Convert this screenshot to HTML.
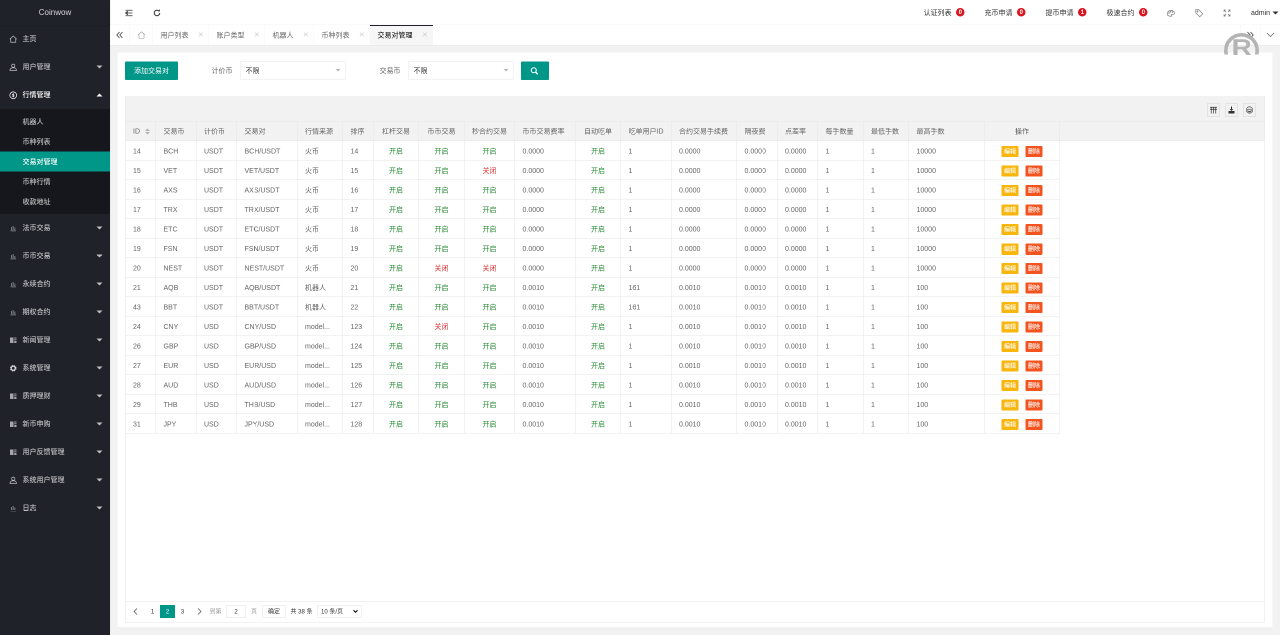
<!DOCTYPE html>
<html lang="zh-CN">
<head>
<meta charset="utf-8">
<title>Coinwow</title>
<style>
*{box-sizing:border-box;margin:0;padding:0}
html,body{width:1280px;height:635px;overflow:hidden;background:#f2f2f2}
body{font-family:"Liberation Sans","Noto Sans CJK SC",sans-serif;font-size:14px;color:#666;line-height:24px}
#root{position:absolute;left:0;top:0;width:2560px;height:1270px;transform:scale(.5);transform-origin:0 0;overflow:hidden;will-change:transform}
a{text-decoration:none;color:inherit}
ul{list-style:none}
.abs{position:absolute}
/* side */
#side{position:absolute;left:0;top:0;width:220px;height:1270px;background:#20222A;color:rgba(255,255,255,.7);z-index:5;box-shadow:1px 0 2px 0 rgba(0,0,0,.05)}
#logo{position:absolute;left:0;top:0;width:220px;height:50px;line-height:50px;text-align:center;font-size:16px;color:rgba(255,255,255,.8);background:#20222A;box-shadow:0 1px 2px 0 rgba(0,0,0,.15);z-index:2}
#nav{position:absolute;left:0;top:50px;width:220px;font-weight:500}
#nav .it{position:relative;height:56px;line-height:54px;padding-left:45px;font-size:14px}
#nav .it.open{color:#fff}
#nav .it svg{position:absolute;left:18px;top:20px;width:17px;height:17px}
#nav .it .more{position:absolute;left:193px;top:25px;width:0;height:0;border:6px solid transparent;border-top-color:rgba(255,255,255,.7)}
#nav .it.open .more{top:19px;border-top-color:transparent;border-bottom-color:#fff}
#nav .child{background:rgba(0,0,0,.3);padding:5px 0}
#nav .child div{height:40px;line-height:40px;padding-left:45px}
#nav .child div.this{background:#009688;color:#fff}
/* header */
#hd{position:absolute;left:220px;top:0;width:2340px;height:50px;background:#fff;border-bottom:1px solid #f6f6f6}
#hd .t{position:absolute;top:0;height:50px;line-height:50px;color:#333;font-size:14px;white-space:nowrap}
#hd .bd{position:absolute;top:16px;width:17px;height:17px;border-radius:9px;background:#d9141e;color:#fff;font-size:12px;font-weight:bold;line-height:17px;text-align:center}
/* tabs */
#tabs{position:absolute;left:220px;top:50px;width:2340px;height:40px;background:#fff;box-shadow:0 1px 2px 0 rgba(0,0,0,.06)}
#tabs .tab{position:absolute;top:0;height:40px;line-height:40px;padding-left:15px;color:#666;font-size:14px;border-right:1px solid #f6f6f6;white-space:nowrap}
#tabs .tab .x{position:absolute;right:10px;top:-1px;font-size:19px;color:#d0d0d0}
#tabs .tab.this{background:#f6f6f6;color:#000}
#tabs .tab.this:before{content:"";position:absolute;left:0;top:0;width:100%;height:2px;background:#20222A}
#tabs .ctl{position:absolute;top:0;width:40px;height:40px;border-right:1px solid #f6f6f6}
#tabs .ctl.r{border-right:0;border-left:1px solid #f6f6f6}
/* card */
#card{position:absolute;left:235px;top:105px;width:2310px;height:1150px;background:#fff;border-radius:2px;box-shadow:0 1px 2px 0 rgba(0,0,0,.05)}
.btn{position:absolute;height:37px;line-height:37px;background:#009688;color:#fff;text-align:center;border-radius:2px;font-size:14px}
.lab{position:absolute;height:38px;line-height:38px;font-size:14px;color:#666}
.sel{position:absolute;height:38px;width:211px;border:1px solid #e6e6e6;border-radius:2px;background:#fff;line-height:36px;padding-left:10px;color:#333;font-size:14px}
.sel:after{content:"";position:absolute;right:9px;top:15px;border:5px solid transparent;border-top-color:#b8b8b8}
/* table view */
#tv{position:absolute;left:250px;top:193px;width:2280px;height:1052px;border:1px solid #e6e6e6;background:#fff}
#tool{position:absolute;left:0;top:0;width:2278px;height:49px;background:#f2f2f2;border-bottom:1px solid #e6e6e6}
#tool .ic{position:absolute;top:13px;width:26px;height:26px;border:1px solid #d4d4d4;background:transparent}
#tool .ic svg{position:absolute;left:4px;top:4px;width:16px;height:16px}
#thbg{position:absolute;left:0;top:49px;width:2278px;height:39px;background:#f2f2f2;border-bottom:1px solid #e6e6e6}
table.tb{position:absolute;left:0;top:49px;border-collapse:separate;border-spacing:0;table-layout:fixed;width:1869px}
table.tb th,table.tb td{height:39px;border-right:1px solid #e6e6e6;border-bottom:1px solid #e6e6e6;padding:0 15px;font-size:14px;line-height:28px;color:#666;text-align:left;font-weight:normal;white-space:nowrap;overflow:hidden;box-sizing:border-box}
table.tb th{background:#f2f2f2}
table.tb td{background:#fff;padding-top:2px}
table.tb .c{text-align:center}
.on{color:#238a30}
.off{color:#dc3030}
.sort{display:inline-block;position:relative;width:10px;height:20px;margin-left:10px;vertical-align:middle}
.sort:before,.sort:after{content:"";position:absolute;left:0;border:5px solid transparent}
.sort:before{top:-1px;border-bottom-color:#b2b2b2}
.sort:after{top:11px;border-top-color:#b2b2b2}
.xs{display:inline-block;height:22px;line-height:22px;padding:0 5px;font-size:12px;font-weight:500;color:#fff;border-radius:2px;vertical-align:middle}
.xs.warm{background:#F8B50C}
.xs.danger{background:#F2531F;margin-left:14px}
/* page */
#pg{position:absolute;left:0;top:1009px;width:2278px;height:41px;border-top:1px solid #e6e6e6;font-size:12px;color:#333}
#pg .p{position:absolute;top:6px;height:26px;line-height:26px;text-align:center;white-space:nowrap}
#pg .cur{background:#009688;color:#fff}
#pg .box{border:1px solid #e2e2e2;border-radius:2px;background:#fff;line-height:24px}
</style>
</head>
<body>
<div id="root">

<div id="side">
  <div id="logo">Coinwow</div>
  <div id="nav">
    <div class="it"><svg viewBox="0 0 17 17" fill="none" stroke="rgba(255,255,255,.7)" stroke-width="1.4"><path d="M1.5 8.5 8.5 2l7 6.5M3.5 7.5v7h10v-7"/></svg>主页</div>
    <div class="it"><svg viewBox="0 0 17 17" fill="none" stroke="rgba(255,255,255,.7)" stroke-width="1.4"><circle cx="8.5" cy="5.5" r="3.2"/><path d="M2 15c0-4 3-5.5 6.5-5.5S15 11 15 15z"/></svg>用户管理<i class="more"></i></div>
    <div class="it open"><svg viewBox="0 0 17 17" fill="none" stroke="#fff" stroke-width="1.4"><circle cx="8.5" cy="8.5" r="6.8"/><path d="M8.5 4.5v8M6.3 10.8c.5.8 3.9 1 3.9-.8 0-1.800-3.800-1-3.800-2.800 0-1.600 3.100-1.600 3.700-.5" stroke-width="1.1"/></svg>行情管理<i class="more"></i></div>
    <div class="child">
      <div>机器人</div>
      <div>币种列表</div>
      <div class="this">交易对管理</div>
      <div>币种行情</div>
      <div>收款地址</div>
    </div>
    <div class="it"><svg viewBox="0 0 17 17" fill="rgba(255,255,255,.55)"><path d="M3 13h11v1.500H3zM4 6h1.500v6H4zM7.500 4h1.500v8H7.500zM11 7h1.500v5H11z"/></svg>法币交易<i class="more"></i></div>
    <div class="it"><svg viewBox="0 0 17 17" fill="rgba(255,255,255,.55)"><path d="M3 13h11v1.500H3zM4 6h1.500v6H4zM7.500 4h1.500v8H7.500zM11 7h1.500v5H11z"/></svg>币币交易<i class="more"></i></div>
    <div class="it"><svg viewBox="0 0 17 17" fill="rgba(255,255,255,.55)"><path d="M3 13h11v1.500H3zM4 6h1.500v6H4zM7.500 4h1.500v8H7.500zM11 7h1.500v5H11z"/></svg>永续合约<i class="more"></i></div>
    <div class="it"><svg viewBox="0 0 17 17" fill="rgba(255,255,255,.55)"><path d="M3 13h11v1.500H3zM4 6h1.500v6H4zM7.500 4h1.500v8H7.500zM11 7h1.500v5H11z"/></svg>期权合约<i class="more"></i></div>
    <div class="it"><svg viewBox="0 0 17 17" fill="rgba(255,255,255,.6)"><path d="M2 3h7v11H2zM10.500 3H15v2h-4.500zM10.500 6.500H15v2h-4.500zM10.500 10H15v4h-4.500z"/></svg>新闻管理<i class="more"></i></div>
    <div class="it"><svg viewBox="0 0 17 17" fill="none" stroke="rgba(255,255,255,.7)"><circle cx="8.500" cy="8.500" r="5" stroke-width="3.200" stroke-dasharray="2.600 1.330"/><circle cx="8.500" cy="8.500" r="4" stroke-width="2.400"/></svg>系统管理<i class="more"></i></div>
    <div class="it"><svg viewBox="0 0 17 17" fill="rgba(255,255,255,.6)"><path d="M2 3h7v11H2zM10.500 3H15v2h-4.500zM10.500 6.500H15v2h-4.500zM10.500 10H15v4h-4.500z"/></svg>质押理财<i class="more"></i></div>
    <div class="it"><svg viewBox="0 0 17 17" fill="rgba(255,255,255,.6)"><path d="M2 3h7v11H2zM10.500 3H15v2h-4.500zM10.500 6.500H15v2h-4.500zM10.500 10H15v4h-4.500z"/></svg>新币申购<i class="more"></i></div>
    <div class="it"><svg viewBox="0 0 17 17" fill="rgba(255,255,255,.6)"><path d="M2 3h7v11H2zM10.500 3H15v2h-4.500zM10.500 6.500H15v2h-4.500zM10.500 10H15v4h-4.500z"/></svg>用户反馈管理<i class="more"></i></div>
    <div class="it"><svg viewBox="0 0 17 17" fill="none" stroke="rgba(255,255,255,.7)" stroke-width="1.4"><circle cx="8.5" cy="5.5" r="3.2"/><path d="M2 15c0-4 3-5.5 6.5-5.500S15 11 15 15z"/></svg>系统用户管理<i class="more"></i></div>
    <div class="it"><svg viewBox="0 0 17 17" fill="rgba(255,255,255,.55)"><path d="M3 13h11v1.500H3zM4 6h1.500v6H4zM7.500 4h1.500v8H7.500zM11 7h1.500v5H11z"/></svg>日志<i class="more"></i></div>
  </div>
</div>

<div id="hd">
  <svg class="abs" style="left:29px;top:17px" width="18" height="18" viewBox="0 0 18 18" fill="none" stroke="#333" stroke-width="1.600"><path d="M2 3.500h14M7 9h9M2 14.500h14M5 6.500 2 9l3 2.500z" /></svg>
  <svg class="abs" style="left:85px;top:17px" width="18" height="18" viewBox="0 0 18 18" fill="none" stroke="#333" stroke-width="2"><path d="M14.500 9a5.500 5.500 0 1 1-1.800-4.100"/><path d="M14.800 1.500v4.300h-4.300z" fill="#333" stroke="none"/></svg>
  <div class="t" style="left:1627px">认证列表</div><div class="bd" style="left:1692px">0</div>
  <div class="t" style="left:1749px">充币申请</div><div class="bd" style="left:1814px">0</div>
  <div class="t" style="left:1871px">提币申请</div><div class="bd" style="left:1936px">1</div>
  <div class="t" style="left:1993px">极速合约</div><div class="bd" style="left:2058px">0</div>
  <svg class="abs" style="left:2113px;top:18px" width="18" height="16" viewBox="0 0 18 16" fill="none" stroke="#777" stroke-width="1.300"><path d="M2 12c-1.500-3 0-8 5-9 4-1 8 1 9 4 .5 2.500-1 3.500-2.500 3.500H11c-1.500 0-1.500 2-.5 2.500.8.500 0 1.500-1.500 1.500-3 0-5.500-.5-7-2.500z"/><circle cx="5" cy="8" r=".8"/><circle cx="8" cy="5.500" r=".8"/><circle cx="12" cy="6" r=".8"/></svg>
  <svg class="abs" style="left:2170px;top:18px" width="17" height="17" viewBox="0 0 17 17" fill="none" stroke="#777" stroke-width="1.300"><path d="M1.500 1.500h6l8 8-6 6-8-8z"/><circle cx="5" cy="5" r="1.200"/></svg>
  <svg class="abs" style="left:2227px;top:19px" width="14" height="14" viewBox="0 0 14 14" fill="none" stroke="#777" stroke-width="1.300"><path d="M1 4.500V1h3.500M9.500 1H13v3.500M13 9.500V13H9.500M4.500 13H1V9.500M1 1l4 4M13 1 9 5M13 13 9 9M1 13l4-4"/></svg>
  <div class="t" style="left:2282px">admin</div>
  <i class="abs" style="left:2325px;top:23px;border:6px solid transparent;border-top-color:#333"></i>
</div>

<div id="tabs">
  <div class="ctl" style="left:0"><svg class="abs" style="left:11px;top:12px" width="16" height="16" viewBox="0 0 16 16" fill="none" stroke="#333" stroke-width="1.500"><path d="M8 2 2.500 8 8 14M14 2 8.500 8 14 14"/></svg></div>
  <div class="tab" style="left:40px;width:46px"><svg class="abs" style="left:15px;top:12px" width="16" height="16" viewBox="0 0 16 16" fill="none" stroke="#999" stroke-width="1.200"><path d="M1.500 7.500 8 1.500l6.500 6M3 6.500v8h10v-8"/></svg></div>
  <div class="tab" style="left:86px;width:112px">用户列表<span class="x">×</span></div>
  <div class="tab" style="left:198px;width:112px">账户类型<span class="x">×</span></div>
  <div class="tab" style="left:310px;width:98px">机器人<span class="x">×</span></div>
  <div class="tab" style="left:408px;width:112px">币种列表<span class="x">×</span></div>
  <div class="tab this" style="left:520px;width:126px">交易对管理<span class="x">×</span></div>
  <div class="ctl r" style="left:2260px"><svg class="abs" style="left:12px;top:12px" width="16" height="16" viewBox="0 0 16 16" fill="none" stroke="#333" stroke-width="1.500"><path d="M2 2l5.500 6L2 14M8 2l5.500 6L8 14"/></svg></div>
  <div class="ctl r" style="left:2300px"><svg class="abs" style="left:11px;top:13px" width="18" height="14" viewBox="0 0 18 14" fill="none" stroke="#666" stroke-width="1.500"><path d="M2 3l7 7 7-7"/></svg></div>
</div>

<svg class="abs" style="left:2440px;top:60px;z-index:9" width="90" height="49" viewBox="0 0 90 49"><circle cx="43" cy="41" r="31.300" fill="none" stroke="#b4b4b4" stroke-width="7.200"/><text transform="translate(43.500 50.700) scale(1.200 1)" x="0" y="0" text-anchor="middle" font-family="Liberation Sans, sans-serif" font-weight="bold" font-size="47" fill="#b4b4b4">R</text></svg>

<div id="card"></div>
<a class="btn" style="left:250px;top:123px;width:106px">添加交易对</a>
<div class="lab" style="left:423px;top:122px">计价币</div>
<div class="sel" style="left:480px;top:122px">不限</div>
<div class="lab" style="left:759px;top:122px">交易币</div>
<div class="sel" style="left:816px;top:122px">不限</div>
<a class="btn" style="left:1042px;top:123px;width:56px"><svg class="abs" style="left:18px;top:10px" width="18" height="18" viewBox="0 0 18 18" fill="none" stroke="#fff" stroke-width="2.200"><circle cx="7.500" cy="7.500" r="5"/><path d="M11.500 11.500l4 4" stroke-width="2.800"/></svg></a>

<div id="tv">
  <div id="tool">
    <div class="ic" style="left:2163px"><svg viewBox="0 0 16 16" fill="none" stroke="#333" stroke-width="1.400"><path d="M1 2.500h14M1 6.500h14M3.500 2.500V15M8 2.500V15M12.500 2.500V15"/></svg></div>
    <div class="ic" style="left:2199px"><svg viewBox="0 0 16 16" fill="#333"><path d="M2 10h12v5H2zM7 1h2v5h2.500L8 10 4.500 6H7z"/></svg></div>
    <div class="ic" style="left:2235px"><svg viewBox="0 0 16 16" fill="none" stroke="#555" stroke-width="1.300"><circle cx="8" cy="8" r="6.500"/><path d="M4.500 6.500h7v4h-7zM5.500 12h5"/></svg></div>
  </div>
  <div id="thbg"></div>
  <table class="tb"><thead><tr><th style="width:61px">ID<i class="sort"></i></th><th style="width:81px">交易币</th><th style="width:81px">计价币</th><th style="width:121px">交易对</th><th style="width:91px">行情来源</th><th style="width:61px">排序</th><th class="c" style="width:91px">杠杆交易</th><th class="c" style="width:91px">币币交易</th><th class="c" style="width:101px">秒合约交易</th><th style="width:121px">币币交易费率</th><th class="c" style="width:91px">自动吃单</th><th style="width:101px">吃单用户ID</th><th style="width:131px">合约交易手续费</th><th style="width:81px">隔夜费</th><th style="width:81px">点差率</th><th style="width:91px">每手数量</th><th style="width:91px">最低手数</th><th style="width:151px">最高手数</th><th class="c" style="width:151px">操作</th></tr></thead><tbody>
<tr><td>14</td><td>BCH</td><td>USDT</td><td>BCH/USDT</td><td>火币</td><td>14</td><td class="c"><span class="on">开启</span></td><td class="c"><span class="on">开启</span></td><td class="c"><span class="on">开启</span></td><td>0.0000</td><td class="c"><span class="on">开启</span></td><td>1</td><td>0.0000</td><td>0.0000</td><td>0.0000</td><td>1</td><td>1</td><td>10000</td><td class="c"><a class="xs warm">编辑</a><a class="xs danger">删除</a></td></tr>
<tr><td>15</td><td>VET</td><td>USDT</td><td>VET/USDT</td><td>火币</td><td>15</td><td class="c"><span class="on">开启</span></td><td class="c"><span class="on">开启</span></td><td class="c"><span class="off">关闭</span></td><td>0.0000</td><td class="c"><span class="on">开启</span></td><td>1</td><td>0.0000</td><td>0.0000</td><td>0.0000</td><td>1</td><td>1</td><td>10000</td><td class="c"><a class="xs warm">编辑</a><a class="xs danger">删除</a></td></tr>
<tr><td>16</td><td>AXS</td><td>USDT</td><td>AXS/USDT</td><td>火币</td><td>16</td><td class="c"><span class="on">开启</span></td><td class="c"><span class="on">开启</span></td><td class="c"><span class="on">开启</span></td><td>0.0000</td><td class="c"><span class="on">开启</span></td><td>1</td><td>0.0000</td><td>0.0000</td><td>0.0000</td><td>1</td><td>1</td><td>10000</td><td class="c"><a class="xs warm">编辑</a><a class="xs danger">删除</a></td></tr>
<tr><td>17</td><td>TRX</td><td>USDT</td><td>TRX/USDT</td><td>火币</td><td>17</td><td class="c"><span class="on">开启</span></td><td class="c"><span class="on">开启</span></td><td class="c"><span class="on">开启</span></td><td>0.0000</td><td class="c"><span class="on">开启</span></td><td>1</td><td>0.0000</td><td>0.0000</td><td>0.0000</td><td>1</td><td>1</td><td>10000</td><td class="c"><a class="xs warm">编辑</a><a class="xs danger">删除</a></td></tr>
<tr><td>18</td><td>ETC</td><td>USDT</td><td>ETC/USDT</td><td>火币</td><td>18</td><td class="c"><span class="on">开启</span></td><td class="c"><span class="on">开启</span></td><td class="c"><span class="on">开启</span></td><td>0.0000</td><td class="c"><span class="on">开启</span></td><td>1</td><td>0.0000</td><td>0.0000</td><td>0.0000</td><td>1</td><td>1</td><td>10000</td><td class="c"><a class="xs warm">编辑</a><a class="xs danger">删除</a></td></tr>
<tr><td>19</td><td>FSN</td><td>USDT</td><td>FSN/USDT</td><td>火币</td><td>19</td><td class="c"><span class="on">开启</span></td><td class="c"><span class="on">开启</span></td><td class="c"><span class="on">开启</span></td><td>0.0000</td><td class="c"><span class="on">开启</span></td><td>1</td><td>0.0000</td><td>0.0000</td><td>0.0000</td><td>1</td><td>1</td><td>10000</td><td class="c"><a class="xs warm">编辑</a><a class="xs danger">删除</a></td></tr>
<tr><td>20</td><td>NEST</td><td>USDT</td><td>NEST/USDT</td><td>火币</td><td>20</td><td class="c"><span class="on">开启</span></td><td class="c"><span class="off">关闭</span></td><td class="c"><span class="off">关闭</span></td><td>0.0000</td><td class="c"><span class="on">开启</span></td><td>1</td><td>0.0000</td><td>0.0000</td><td>0.0000</td><td>1</td><td>1</td><td>10000</td><td class="c"><a class="xs warm">编辑</a><a class="xs danger">删除</a></td></tr>
<tr><td>21</td><td>AQB</td><td>USDT</td><td>AQB/USDT</td><td>机器人</td><td>21</td><td class="c"><span class="on">开启</span></td><td class="c"><span class="on">开启</span></td><td class="c"><span class="on">开启</span></td><td>0.0010</td><td class="c"><span class="on">开启</span></td><td>161</td><td>0.0010</td><td>0.0010</td><td>0.0010</td><td>1</td><td>1</td><td>100</td><td class="c"><a class="xs warm">编辑</a><a class="xs danger">删除</a></td></tr>
<tr><td>43</td><td>BBT</td><td>USDT</td><td>BBT/USDT</td><td>机器人</td><td>22</td><td class="c"><span class="on">开启</span></td><td class="c"><span class="on">开启</span></td><td class="c"><span class="on">开启</span></td><td>0.0010</td><td class="c"><span class="on">开启</span></td><td>161</td><td>0.0010</td><td>0.0010</td><td>0.0010</td><td>1</td><td>1</td><td>100</td><td class="c"><a class="xs warm">编辑</a><a class="xs danger">删除</a></td></tr>
<tr><td>24</td><td>CNY</td><td>USD</td><td>CNY/USD</td><td>model...</td><td>123</td><td class="c"><span class="on">开启</span></td><td class="c"><span class="off">关闭</span></td><td class="c"><span class="on">开启</span></td><td>0.0010</td><td class="c"><span class="on">开启</span></td><td>1</td><td>0.0010</td><td>0.0010</td><td>0.0010</td><td>1</td><td>1</td><td>100</td><td class="c"><a class="xs warm">编辑</a><a class="xs danger">删除</a></td></tr>
<tr><td>26</td><td>GBP</td><td>USD</td><td>GBP/USD</td><td>model...</td><td>124</td><td class="c"><span class="on">开启</span></td><td class="c"><span class="on">开启</span></td><td class="c"><span class="on">开启</span></td><td>0.0010</td><td class="c"><span class="on">开启</span></td><td>1</td><td>0.0010</td><td>0.0010</td><td>0.0010</td><td>1</td><td>1</td><td>100</td><td class="c"><a class="xs warm">编辑</a><a class="xs danger">删除</a></td></tr>
<tr><td>27</td><td>EUR</td><td>USD</td><td>EUR/USD</td><td>model...</td><td>125</td><td class="c"><span class="on">开启</span></td><td class="c"><span class="on">开启</span></td><td class="c"><span class="on">开启</span></td><td>0.0010</td><td class="c"><span class="on">开启</span></td><td>1</td><td>0.0010</td><td>0.0010</td><td>0.0010</td><td>1</td><td>1</td><td>100</td><td class="c"><a class="xs warm">编辑</a><a class="xs danger">删除</a></td></tr>
<tr><td>28</td><td>AUD</td><td>USD</td><td>AUD/USD</td><td>model...</td><td>126</td><td class="c"><span class="on">开启</span></td><td class="c"><span class="on">开启</span></td><td class="c"><span class="on">开启</span></td><td>0.0010</td><td class="c"><span class="on">开启</span></td><td>1</td><td>0.0010</td><td>0.0010</td><td>0.0010</td><td>1</td><td>1</td><td>100</td><td class="c"><a class="xs warm">编辑</a><a class="xs danger">删除</a></td></tr>
<tr><td>29</td><td>THB</td><td>USD</td><td>THB/USD</td><td>model...</td><td>127</td><td class="c"><span class="on">开启</span></td><td class="c"><span class="on">开启</span></td><td class="c"><span class="on">开启</span></td><td>0.0010</td><td class="c"><span class="on">开启</span></td><td>1</td><td>0.0010</td><td>0.0010</td><td>0.0010</td><td>1</td><td>1</td><td>100</td><td class="c"><a class="xs warm">编辑</a><a class="xs danger">删除</a></td></tr>
<tr><td>31</td><td>JPY</td><td>USD</td><td>JPY/USD</td><td>model...</td><td>128</td><td class="c"><span class="on">开启</span></td><td class="c"><span class="on">开启</span></td><td class="c"><span class="on">开启</span></td><td>0.0010</td><td class="c"><span class="on">开启</span></td><td>1</td><td>0.0010</td><td>0.0010</td><td>0.0010</td><td>1</td><td>1</td><td>100</td><td class="c"><a class="xs warm">编辑</a><a class="xs danger">删除</a></td></tr>
</tbody></table>
  <div id="pg">
    <svg class="abs" style="left:14px;top:11px" width="12" height="16" viewBox="0 0 12 16" fill="none" stroke="#444" stroke-width="1.400"><path d="M9 2 3 8l6 6"/></svg>
    <div class="p" style="left:39px;width:30px">1</div>
    <div class="p cur" style="left:69px;width:30px">2</div>
    <div class="p" style="left:99px;width:30px">3</div>
    <svg class="abs" style="left:142px;top:11px" width="12" height="16" viewBox="0 0 12 16" fill="none" stroke="#444" stroke-width="1.400"><path d="M3 2l6 6-6 6"/></svg>
    <div class="p" style="left:168px;color:#999">到第</div>
    <div class="p box" style="left:201px;width:40px">2</div>
    <div class="p" style="left:251px;color:#999">页</div>
    <div class="p box" style="left:274px;width:46px">确定</div>
    <div class="p" style="left:330px">共 38 条</div>
    <div class="p box" style="left:384px;width:88px;text-align:left;padding-left:6px">10 条/页<svg class="abs" style="left:70px;top:8px" width="10" height="8" viewBox="0 0 10 8" fill="none" stroke="#000" stroke-width="2"><path d="M1 1.500l4 4 4-4"/></svg></div>
  </div>
</div>

</div>
</body>
</html>
